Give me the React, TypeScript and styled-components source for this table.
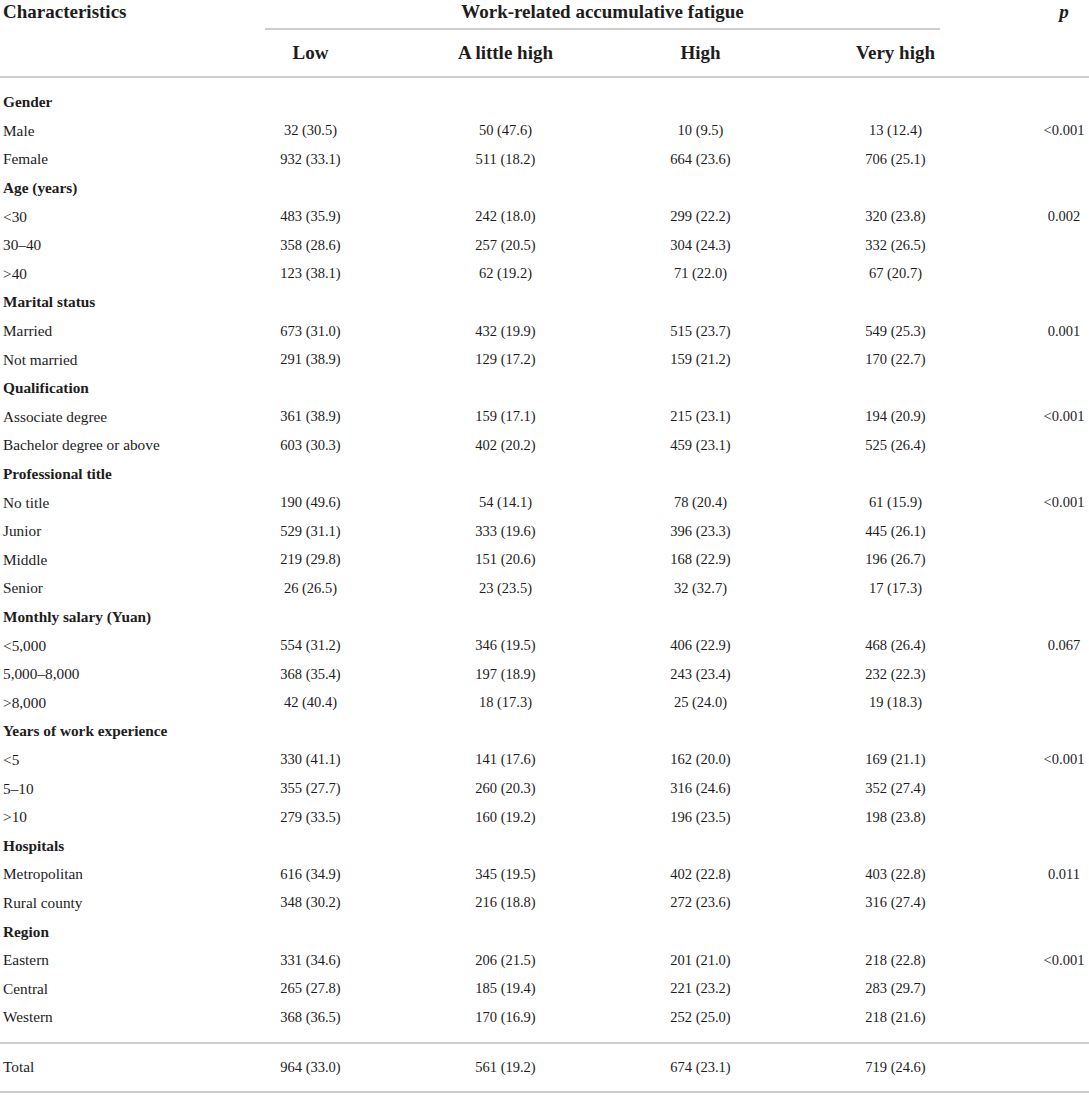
import * as React from 'react'
import styled, { createGlobalStyle } from 'styled-components'

const GlobalStyle = createGlobalStyle`
  body {
    margin: 0;
    background: #ffffff;
    font-family: "Liberation Serif", "Times New Roman", serif;
    color: #1e1c1d;
  }
`

const COLS = '213px repeat(4, 195px) 1fr'
const RULE = '2px solid #cdcdcd'

const Table = styled.div`
  width: 1089px;
  display: flex;
  flex-direction: column;
`

const HeadTop = styled.div`
  display: grid;
  grid-template-columns: 213px 780px 1fr;
  height: 30px;
`

const HeadCell = styled.div<{ $align?: 'left' | 'center' }>`
  font-size: 19px;
  font-weight: bold;
  line-height: 24px;
  text-align: ${(p) => p.$align || 'center'};
  padding-left: ${(p) => (p.$align === 'left' ? '3px' : '0')};
`

const GroupHead = styled(HeadCell)`
  margin: 0 53px 0 52px;
  border-bottom: ${RULE};
  height: 28px;
`

const PHead = styled(HeadCell)`
  font-style: italic;
  padding-left: 46px;
`

const HeadBottom = styled.div`
  display: grid;
  grid-template-columns: ${COLS};
  align-items: center;
  height: 46px;
  border-bottom: ${RULE};
`

const Body = styled.div`
  padding: 10px 0 10px;
  display: flex;
  flex-direction: column;
`

const Row = styled.div`
  display: grid;
  grid-template-columns: ${COLS};
  align-items: center;
  height: 28.6px;
`

const Label = styled.div<{ $bold?: boolean }>`
  font-size: 15.3px;
  font-weight: ${(p) => (p.$bold ? 'bold' : 'normal')};
  padding-left: 3px;
  white-space: nowrap;
`

const Value = styled.div`
  font-size: 14.5px;
  text-align: center;
  white-space: nowrap;
`

const PValue = styled(Value)`
  padding-left: 46px;
`

const TotalRow = styled(Row)`
  height: 47px;
  border-top: ${RULE};
  border-bottom: ${RULE};
`

type DataRow = [string, string, string, string, string, string?]

interface IGroup {
  title: string
  rows: DataRow[]
}

const groups: IGroup[] = [
  {
    title: 'Gender',
    rows: [
      ['Male', '32 (30.5)', '50 (47.6)', '10 (9.5)', '13 (12.4)', '<0.001'],
      ['Female', '932 (33.1)', '511 (18.2)', '664 (23.6)', '706 (25.1)'],
    ],
  },
  {
    title: 'Age (years)',
    rows: [
      ['<30', '483 (35.9)', '242 (18.0)', '299 (22.2)', '320 (23.8)', '0.002'],
      ['30–40', '358 (28.6)', '257 (20.5)', '304 (24.3)', '332 (26.5)'],
      ['>40', '123 (38.1)', '62 (19.2)', '71 (22.0)', '67 (20.7)'],
    ],
  },
  {
    title: 'Marital status',
    rows: [
      ['Married', '673 (31.0)', '432 (19.9)', '515 (23.7)', '549 (25.3)', '0.001'],
      ['Not married', '291 (38.9)', '129 (17.2)', '159 (21.2)', '170 (22.7)'],
    ],
  },
  {
    title: 'Qualification',
    rows: [
      ['Associate degree', '361 (38.9)', '159 (17.1)', '215 (23.1)', '194 (20.9)', '<0.001'],
      ['Bachelor degree or above', '603 (30.3)', '402 (20.2)', '459 (23.1)', '525 (26.4)'],
    ],
  },
  {
    title: 'Professional title',
    rows: [
      ['No title', '190 (49.6)', '54 (14.1)', '78 (20.4)', '61 (15.9)', '<0.001'],
      ['Junior', '529 (31.1)', '333 (19.6)', '396 (23.3)', '445 (26.1)'],
      ['Middle', '219 (29.8)', '151 (20.6)', '168 (22.9)', '196 (26.7)'],
      ['Senior', '26 (26.5)', '23 (23.5)', '32 (32.7)', '17 (17.3)'],
    ],
  },
  {
    title: 'Monthly salary (Yuan)',
    rows: [
      ['<5,000', '554 (31.2)', '346 (19.5)', '406 (22.9)', '468 (26.4)', '0.067'],
      ['5,000–8,000', '368 (35.4)', '197 (18.9)', '243 (23.4)', '232 (22.3)'],
      ['>8,000', '42 (40.4)', '18 (17.3)', '25 (24.0)', '19 (18.3)'],
    ],
  },
  {
    title: 'Years of work experience',
    rows: [
      ['<5', '330 (41.1)', '141 (17.6)', '162 (20.0)', '169 (21.1)', '<0.001'],
      ['5–10', '355 (27.7)', '260 (20.3)', '316 (24.6)', '352 (27.4)'],
      ['>10', '279 (33.5)', '160 (19.2)', '196 (23.5)', '198 (23.8)'],
    ],
  },
  {
    title: 'Hospitals',
    rows: [
      ['Metropolitan', '616 (34.9)', '345 (19.5)', '402 (22.8)', '403 (22.8)', '0.011'],
      ['Rural county', '348 (30.2)', '216 (18.8)', '272 (23.6)', '316 (27.4)'],
    ],
  },
  {
    title: 'Region',
    rows: [
      ['Eastern', '331 (34.6)', '206 (21.5)', '201 (21.0)', '218 (22.8)', '<0.001'],
      ['Central', '265 (27.8)', '185 (19.4)', '221 (23.2)', '283 (29.7)'],
      ['Western', '368 (36.5)', '170 (16.9)', '252 (25.0)', '218 (21.6)'],
    ],
  },
]

const levels = ['Low', 'A little high', 'High', 'Very high']

const DataLine: React.FC<{ row: DataRow }> = ({ row }) => (
  <Row>
    <Label>{row[0]}</Label>
    <Value>{row[1]}</Value>
    <Value>{row[2]}</Value>
    <Value>{row[3]}</Value>
    <Value>{row[4]}</Value>
    <PValue>{row[5] || ''}</PValue>
  </Row>
)

const App: React.FC = () => (
  <>
    <GlobalStyle />
    <Table>
      <HeadTop>
        <HeadCell $align="left">Characteristics</HeadCell>
        <GroupHead>Work-related accumulative fatigue</GroupHead>
        <PHead>p</PHead>
      </HeadTop>
      <HeadBottom>
        <div />
        {levels.map((l) => (
          <HeadCell key={l}>{l}</HeadCell>
        ))}
        <div />
      </HeadBottom>
      <Body>
        {groups.map((g) => (
          <React.Fragment key={g.title}>
            <Row>
              <Label $bold>{g.title}</Label>
            </Row>
            {g.rows.map((r) => (
              <DataLine key={g.title + r[0]} row={r} />
            ))}
          </React.Fragment>
        ))}
      </Body>
      <TotalRow>
        <Label>Total</Label>
        <Value>964 (33.0)</Value>
        <Value>561 (19.2)</Value>
        <Value>674 (23.1)</Value>
        <Value>719 (24.6)</Value>
        <div />
      </TotalRow>
    </Table>
  </>
)

export default App
